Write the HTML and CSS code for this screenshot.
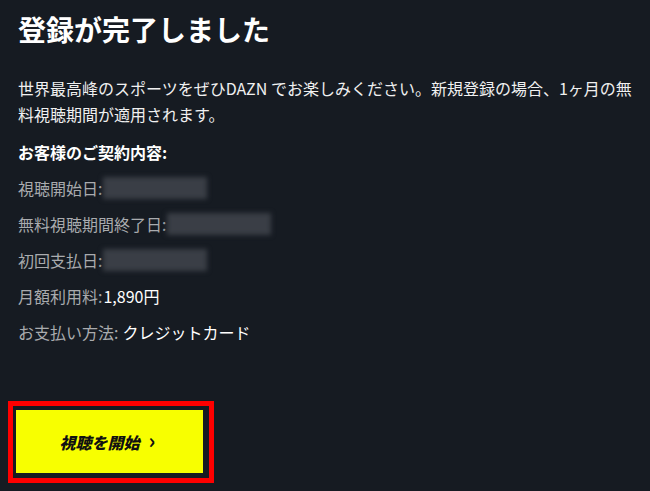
FILE: index.html
```html
<!DOCTYPE html>
<html lang="ja">
<head>
<meta charset="utf-8">
<link rel="stylesheet" href="styles.css">
</head>
<body>
<main class="page">
  <h1 class="title">登録が完了しました</h1>
  <p class="lead">世界最高峰のスポーツをぜひDAZN でお楽しみください。新規登録の場合、1ヶ月の無料視聴期間が適用されます。</p>
  <h2 class="subhead">お客様のご契約内容:</h2>
  <ul class="details">
    <li class="row"><span class="label">視聴開始日:</span><span class="blur"></span></li>
    <li class="row"><span class="label">無料視聴期間終了日:</span><span class="blur"></span></li>
    <li class="row"><span class="label">初回支払日:</span><span class="blur"></span></li>
    <li class="row"><span class="label">月額利用料:</span><span class="value">1,890円</span></li>
    <li class="row"><span class="label">お支払い方法:</span><span class="value value-wide">クレジットカード</span></li>
  </ul>
  <div class="highlight">
    <button class="cta" type="button">視聴を開始<span class="chev">›</span></button>
  </div>
</main>
</body>
</html>
```
FILE: styles.css
```css
html, body {
  margin: 0;
  padding: 0;
  background: #161b22;
}
body {
  font-family: "Noto Sans CJK JP", "Noto Sans", sans-serif;
  color: #f2f2f2;
  width: 650px;
  height: 491px;
  overflow: hidden;
}
.page {
  padding: 13px 16px 0 18px;
}
.title {
  margin: 0;
  font-size: 28px;
  line-height: 32px;
  font-weight: 700;
  color: #ffffff;
  letter-spacing: 0;
}
.lead {
  margin: 30px 0 0;
  font-size: 16px;
  line-height: 26px;
  color: #f0f0f0;
}
.subhead {
  margin: 12px 0 0;
  font-size: 16px;
  line-height: 26px;
  font-weight: 700;
  color: #ffffff;
}
.details {
  list-style: none;
  margin: 10px 0 0;
  padding: 0;
  display: flex;
  flex-direction: column;
  gap: 10px;
}
.row {
  display: flex;
  align-items: center;
  height: 26px;
  font-size: 16px;
  line-height: 26px;
}
.label {
  color: #a9abae;
}
.value {
  color: #ffffff;
  margin-left: 1px;
}
.value-wide {
  margin-left: 4px;
}
.blur {
  display: block;
  width: 104px;
  height: 22px;
  background: #3a3e46;
  filter: blur(2.5px);
  margin-left: 1px;
}
.highlight {
  box-sizing: border-box;
  margin: 56px 0 0 -10px;
  width: 206px;
  height: 82px;
  border: 5px solid #ff0000;
  padding: 4px 0 0 3px;
}
.cta {
  display: flex;
  align-items: center;
  justify-content: center;
  width: 187px;
  height: 63px;
  border: none;
  background: #f8ff00;
  color: #111;
  font-family: "Noto Sans CJK JP", sans-serif;
  font-size: 16px;
  font-weight: 900;
  font-style: italic;
  padding: 0 4px 0 0;
  margin: 0;
}
.chev {
  font-style: normal;
  font-size: 21px;
  font-weight: 700;
  margin-left: 9px;
  line-height: 1;
  position: relative;
  top: -1px;
}
```
